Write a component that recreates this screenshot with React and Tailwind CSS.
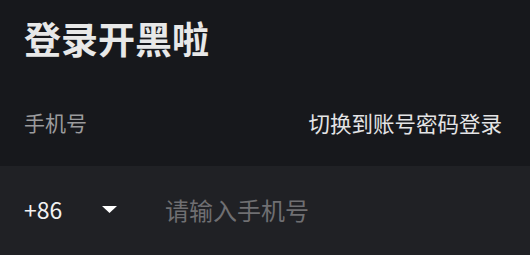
export default function App() {
  return (
    <div
      className="w-[530px] h-[255px] bg-[#17181c] flex flex-col overflow-hidden"
      style={{ fontFamily: '"Noto Sans CJK SC", "Noto Sans", sans-serif' }}
    >
      <div className="px-6 pt-[13px] h-[80px]">
        <h1 className="text-[37px] leading-[50px] font-bold text-[#e8e8e8]">登录开黑啦</h1>
      </div>
      <div className="flex items-center justify-between px-6 pr-[28px] h-[86px]">
        <span className="text-[21px] text-[#9b9b9d]">手机号</span>
        <button className="text-[21.5px] text-[#e4e4e6]">切换到账号密码登录</button>
      </div>
      <div className="flex-1 bg-[#202125] flex items-center px-6 pb-[2px]">
        <div className="flex items-center w-[141px]">
          <span className="text-[23px] text-[#f2f2f2] w-[78px]">+86</span>
          <svg width="15" height="7" viewBox="0 0 15 7">
            <path d="M0 0 L15 0 L7.5 7 Z" fill="#ffffff" />
          </svg>
        </div>
        <input
          className="bg-transparent outline-none text-[24px] text-white placeholder-[#6f6f72] w-[300px]"
          placeholder="请输入手机号"
        />
      </div>
    </div>
  );
}
